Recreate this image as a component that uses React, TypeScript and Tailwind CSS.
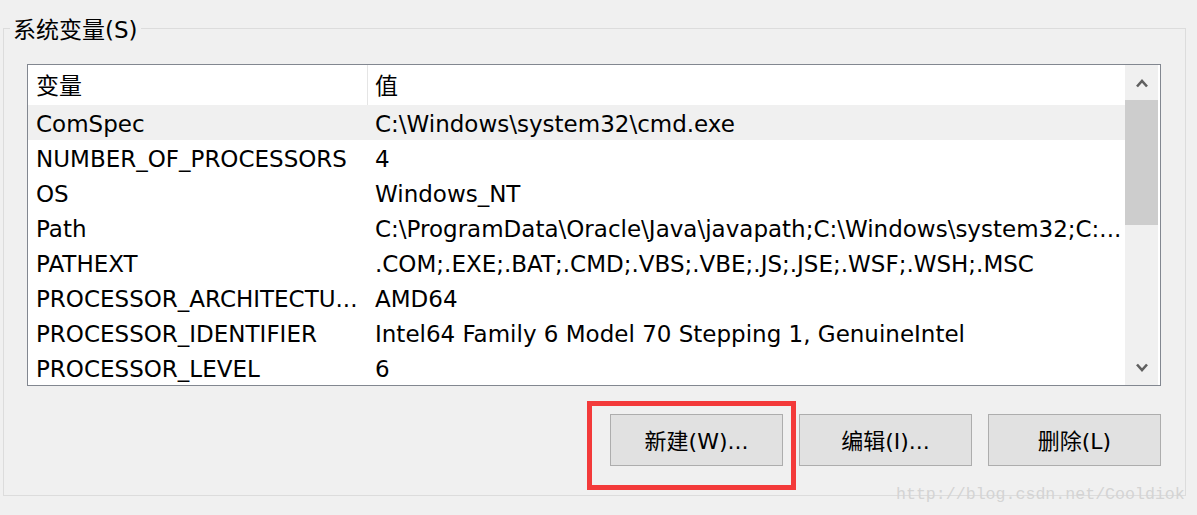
const rows = [
  { name: "ComSpec", value: "C:\\Windows\\system32\\cmd.exe" },
  { name: "NUMBER_OF_PROCESSORS", value: "4" },
  { name: "OS", value: "Windows_NT" },
  { name: "Path", value: "C:\\ProgramData\\Oracle\\Java\\javapath;C:\\Windows\\system32;C:..." },
  { name: "PATHEXT", value: ".COM;.EXE;.BAT;.CMD;.VBS;.VBE;.JS;.JSE;.WSF;.WSH;.MSC" },
  { name: "PROCESSOR_ARCHITECTU...", value: "AMD64" },
  { name: "PROCESSOR_IDENTIFIER", value: "Intel64 Family 6 Model 70 Stepping 1, GenuineIntel" },
  { name: "PROCESSOR_LEVEL", value: "6" },
];

const buttons = ["新建(W)...", "编辑(I)...", "删除(L)"];

function Arrow({ down }: { down?: boolean }) {
  return (
    <svg width="12" height="9" viewBox="0 0 12 9" className={down ? "rotate-180" : ""}>
      <polyline points="1,7.5 6,2 11,7.5" fill="none" stroke="#606060" strokeWidth="2.6" />
    </svg>
  );
}

export default function App() {
  return (
    <div className="relative h-[515px] w-[1197px] overflow-hidden bg-[#f0f0f0] pt-[28px] pl-[3px] text-black [font-family:'DejaVu_Sans','Noto_Sans_CJK_SC',sans-serif]">
      <div className="relative h-[468px] w-[1183px] border border-[#dcdcdc] pt-[35px] pl-[23px]">
        <span className="absolute top-[-14px] left-[6px] bg-[#f0f0f0] px-[3px] text-[23px] leading-[30px]">
          系统变量(S)
        </span>

        <div className="flex h-[322px] w-[1134px] border border-[#828790] bg-white">
          <div className="flex w-[1097px] flex-col">
            <div className="flex h-[40px] items-center text-[23px] leading-none">
              <div className="w-[339px] pl-[8px] pt-[2px]">变量</div>
              <div className="h-full w-px bg-[#e5e5e5]" />
              <div className="pl-[7px] pt-[2px]">值</div>
            </div>
            {rows.map((row, i) => (
              <div
                key={row.name}
                className={`flex h-[35px] items-center text-[23px] leading-none ${i === 0 ? "bg-[#f0f0f0]" : ""}`}
              >
                <div className="w-[340px] whitespace-nowrap pl-[8px] pt-[3px]">{row.name}</div>
                <div className="whitespace-nowrap pl-[7px] pt-[3px]">{row.value}</div>
              </div>
            ))}
          </div>
          <div className="flex w-[33px] flex-col bg-[#f0f0f0]">
            <div className="flex h-[35px] items-center justify-center pt-[2px]">
              <Arrow />
            </div>
            <div className="h-[125px] bg-[#cdcdcd]" />
            <div className="flex-1" />
            <div className="flex h-[35px] items-center justify-center">
              <Arrow down />
            </div>
          </div>
        </div>

        <div className="mt-[28px] flex w-[1134px] justify-end gap-[16px]">
          {buttons.map((label) => (
            <button
              key={label}
              className="h-[52px] w-[173px] border border-[#adadad] bg-[#e1e1e1] pt-[3px] text-[22px] leading-none"
            >
              {label}
            </button>
          ))}
        </div>
      </div>

      <div className="absolute top-[401px] left-[587px] h-[89px] w-[209px] border-[5px] border-[#f33a3a]" />

      <span className="absolute top-[484px] left-[896px] text-[16.6px] leading-[22px] text-[#d4d4d4] [font-family:'Liberation_Mono',monospace]">
        http://blog.csdn.net/Cooldiok
      </span>
    </div>
  );
}
